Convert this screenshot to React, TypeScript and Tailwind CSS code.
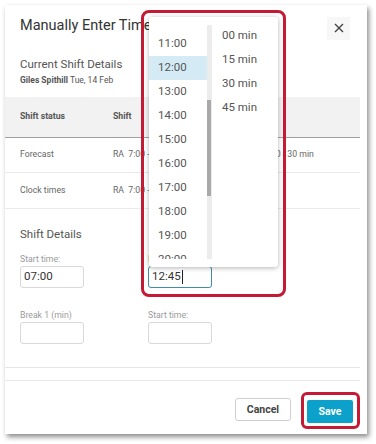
const hours = ['11:00', '12:00', '13:00', '14:00', '15:00', '16:00', '17:00', '18:00', '19:00', '20:00', '21:00'];
const minutes = ['00 min', '15 min', '30 min', '45 min'];

const TimeDropdown = () => (
	<div className="absolute bottom-full left-0 flex h-[250px] w-[129px] rounded-[3px] bg-white py-[8px] shadow-[0_1px_5px_rgba(0,0,0,0.3)]">
		<div className="h-full w-[58px] overflow-hidden pt-[6.5px]">
			{hours.map((h) => (
				<div
					key={h}
					className={`flex h-[24px] items-center pl-[9px] text-[11.5px] text-[#555] ${h === '12:00' ? 'bg-[#d4ebf5]' : ''}`}
				>
					{h}
				</div>
			))}
		</div>
		<div className="relative h-full w-[5px] bg-[#ececec]">
			<div className="absolute left-0 top-[75px] h-[96px] w-[4px] bg-[#a9a9a9]"></div>
		</div>
		<div className="-mt-[1px] flex-1 pl-[10px]">
			{minutes.map((m) => (
				<div key={m} className="flex h-[24px] items-center text-[11.5px] text-[#555]">
					{m}
				</div>
			))}
		</div>
	</div>
);

const Field = ({ label, value, focused }: { label: string; value?: string; focused?: boolean }) => (
	<div className="flex flex-col">
		<span className="h-[12px] text-[8.7px] leading-[12px] text-[#9a9a9a]">{label}</span>
		<div
			className={`relative mt-[1px] flex h-[22px] w-[64px] items-center rounded-[3px] border bg-white pl-[3px] text-[11.5px] text-[#333] ${focused ? 'border-[#3f8ea5]' : 'border-[#d9d9d9]'}`}
		>
			{value}
			{focused && <span className="ml-px h-[14px] w-px bg-[#222]"></span>}
			{focused && (
				<>
					<TimeDropdown />
					<div className="pointer-events-none absolute -left-[8px] -top-[257px] h-[287px] w-[145px] rounded-[8px] border-[3px] border-[#c41a35]"></div>
				</>
			)}
		</div>
	</div>
);

const App = () => {
	return (
		<div className="min-h-screen bg-white p-[5px] font-['Roboto',sans-serif]">
			<div className="relative h-[429px] w-[362px] bg-white pr-[7px] shadow-[2px_3px_5px_rgba(0,0,0,0.45)]">
				<div className="flex flex-col pt-[9px]">
					<div className="flex h-[24px] items-center justify-between pl-[15px] pr-[10px]">
						<h1 className="text-[14.5px] leading-[24px] text-[#333]">Manually Enter Time</h1>
						<button className="mt-[4px] flex h-[23px] w-[23px] items-center justify-center bg-[#f7f7f7]">
							<svg width="10" height="10" viewBox="0 0 10 10" stroke="#444" strokeWidth="1.4">
								<path d="M1 1L9 9M9 1L1 9" />
							</svg>
						</button>
					</div>
					<div className="mt-[18px] pl-[15px] text-[11.5px] leading-[16px] text-[#555]">Current Shift Details</div>
					<div className="mt-[2px] mb-[11px] pl-[15px] text-[8.5px] leading-[12px] text-[#555]">
						<span className="font-bold">Giles Spithill</span> Tue, 14 Feb
					</div>
				</div>

				<div className="grid h-[41px] grid-cols-[93px_146px_1fr] items-center border-b border-[#a0a0a0] bg-[#f2f2f2] pl-[15px] text-[8.7px] font-bold text-[#555]">
					<span>Shift status</span>
					<span>Shift</span>
					<span></span>
				</div>
				<div className="grid h-[35px] grid-cols-[93px_146px_1fr] items-center border-b border-[#ebebeb] pl-[15px] text-[8.7px] text-[#666]">
					<span>Forecast</span>
					<span>RA&nbsp;&nbsp;7:00 - 15:30</span>
					<span>12:30 - 30 min</span>
				</div>
				<div className="grid h-[36px] grid-cols-[93px_146px_1fr] items-center border-b border-[#ebebeb] pl-[15px] text-[8.7px] text-[#666]">
					<span>Clock times</span>
					<span>RA&nbsp;&nbsp;7:00 - 15:30</span>
					<span></span>
				</div>

				<div className="border-b border-[#e6e6e6] pl-[15px] pt-[17px] pb-[23px]">
					<div className="text-[11.5px] leading-[16px] text-[#555]">Shift Details</div>
					<div className="mt-[11px] grid grid-cols-[128px_1fr]">
						<Field label="Start time:" value="07:00" />
						<Field label="End time:" value="12:45" focused />
					</div>
					<div className="mt-[21px] grid grid-cols-[128px_1fr]">
						<Field label="Break 1 (min)" />
						<Field label="Start time:" />
					</div>
				</div>
				<div className="h-[13px] border-b border-[#e6e6e6]"></div>

				<div className="flex justify-end gap-[16px] pt-[17px] pr-[7px]">
					<button className="h-[23px] w-[56px] rounded-[3px] border border-[#cfcfcf] bg-white text-[10.5px] font-bold text-[#444]">
						Cancel
					</button>
					<div className="relative">
						<button className="h-[23px] w-[46px] rounded-[2px] bg-[#0ba1cb] text-[10.5px] font-bold text-white">Save</button>
						<div className="pointer-events-none absolute -left-[6px] -right-[7px] -top-[6px] -bottom-[6px] rounded-[6px] border-[3px] border-[#c41a35]"></div>
					</div>
				</div>
			</div>
		</div>
	);
};

export default App;
